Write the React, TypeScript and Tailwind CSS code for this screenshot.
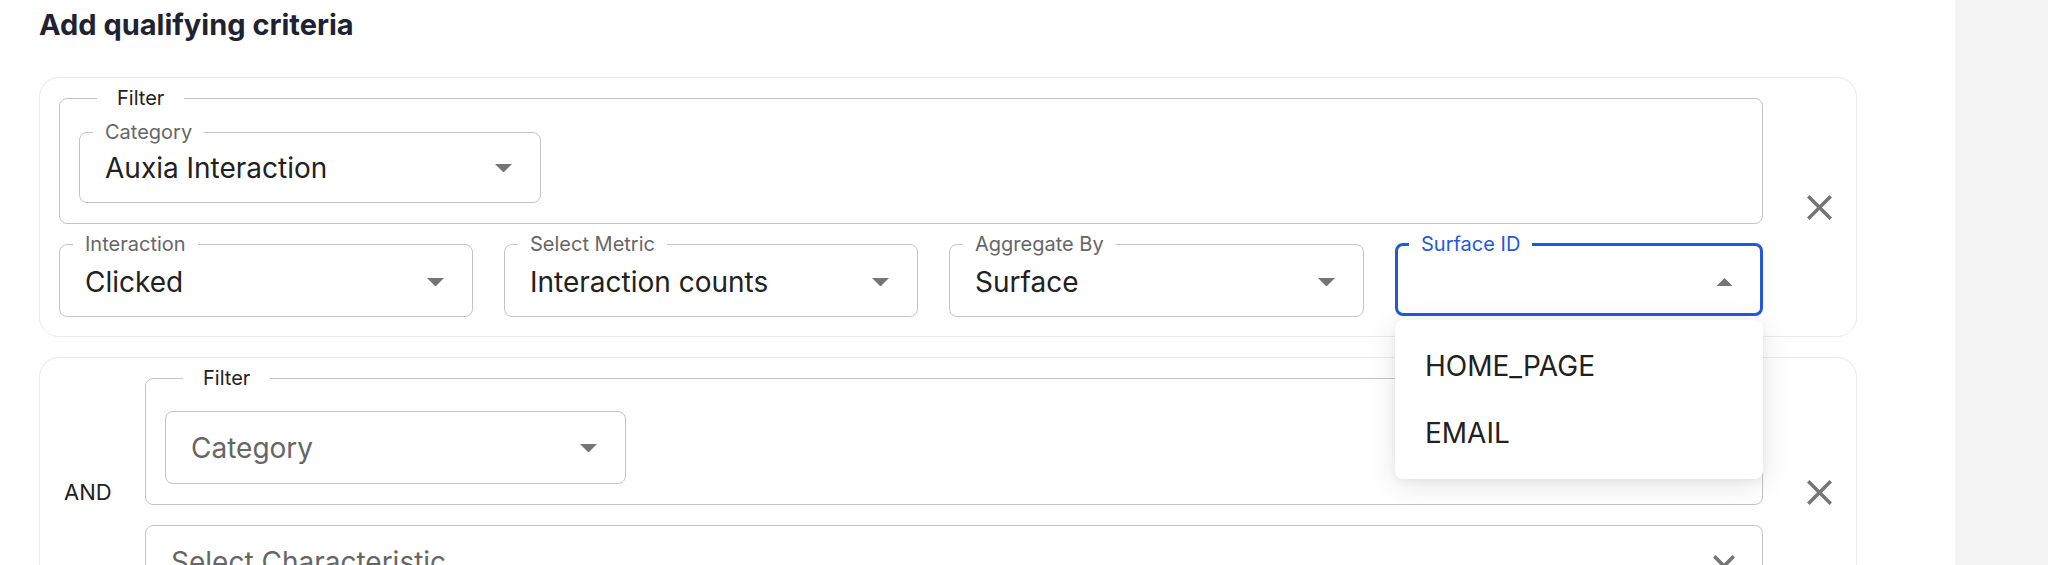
import React from "react";
import clsx from "clsx";

const CLOSE_PATH =
  "M19 6.41 17.59 5 12 10.59 6.41 5 5 6.41 10.59 12 5 17.59 6.41 19 12 13.41 17.59 19 19 17.59 13.41 12z";

const Caret = ({ up = false }: { up?: boolean }) => (
  <svg
    viewBox={up ? "7 9 10 5" : "7 10 10 5"}
    className="h-[8.5px] w-[17px] shrink-0 fill-[#757575]"
  >
    <path d={up ? "M7 14l5-5 5 5z" : "M7 10l5 5 5-5z"} />
  </svg>
);

const Chevron = () => (
  <svg viewBox="6 8.59 12 7.41" className="h-[13.6px] w-[22px] shrink-0 fill-[#757575]">
    <path d="M16.59 8.59 12 13.17 7.41 8.59 6 10l6 6 6-6z" />
  </svg>
);

const CloseBtn = ({ className }: { className?: string }) => (
  <button className={clsx("ml-[44px] shrink-0", className)}>
    <svg viewBox="5 5 14 14" className="h-[25px] w-[25px] fill-[#757575]">
      <path d={CLOSE_PATH} />
    </svg>
  </button>
);

// labelled outlined select (MUI-ish notched outline)
const LabelSelect = ({
  label,
  value,
  focused,
  small,
  className,
  children,
}: {
  label: string;
  value?: string;
  focused?: boolean;
  small?: boolean;
  className?: string;
  children?: React.ReactNode;
}) => (
  <div className={clsx("relative", className)}>
    <fieldset
      className={clsx(
        "min-w-0 rounded-[8px]",
        focused ? "border-[3px] border-[#2558d9]" : "border border-[#c4c4c4]"
      )}
    >
      <legend
        className={clsx(
          "px-[12px] text-[20px] leading-[24px]",
          focused ? "ml-[11px] text-[#2558d9]" : "ml-[13px] text-[#666666]"
        )}
      >
        {label}
      </legend>
      <div
        className={clsx(
          "flex items-center justify-between",
          focused ? "pl-[23px] pr-[27px]" : "pl-[25px] pr-[28px]",
          small ? "pt-[7px] pb-[17px]" : focused ? "pt-[9px] pb-[14px]" : "pt-[9px] pb-[17px]"
        )}
      >
        <span className="h-[34px] text-[28px] leading-[34px] text-[#212121]">{value}</span>
        <Caret up={focused} />
      </div>
    </fieldset>
    {children}
  </div>
);

const PlainSelect = ({
  placeholder,
  chevron,
  className,
}: {
  placeholder: string;
  chevron?: boolean;
  className?: string;
}) => (
  <div
    className={clsx(
      "flex items-center justify-between rounded-[8px] border border-[#c4c4c4] pt-[19px] pb-[18px] pl-[25px]",
      chevron ? "pr-[27px]" : "pr-[28px]",
      className
    )}
  >
    <span className="text-[28px] leading-[34px] text-[#666666]">{placeholder}</span>
    {chevron ? <Chevron /> : <Caret />}
  </div>
);

// legend sits at the content edge, so its margin is counted after pl-[19px]
const FilterBox = ({
  className,
  children,
}: {
  className?: string;
  children: React.ReactNode;
}) => (
  <fieldset
    className={clsx("min-w-0 rounded-[8px] border border-[#c4c4c4] pl-[19px] pb-[20px]", className)}
  >
    <legend className="ml-[18px] px-[20px] text-[20px] leading-[24px] text-[#222222]">
      Filter
    </legend>
    {children}
  </fieldset>
);

const options = ["HOME_PAGE", "EMAIL"];

export default function App() {
  return (
    <div className="flex h-[565px] w-full overflow-hidden bg-white font-[family-name:Inter,sans-serif]">
      <main className="w-[1955px] shrink-0 pl-[39px]">
        <h2 className="pt-[7px] text-[29px] font-bold leading-[36px] text-[#1e2231]">
          Add qualifying criteria
        </h2>

        {/* first criterion */}
        <section className="mt-[34px] flex w-[1818px] items-center rounded-[20px] border border-[#ebebeb] pt-[8px] pb-[19px] pl-[19px]">
          <div className="flex w-[1704px] flex-col">
            <FilterBox className="pt-[10px]">
              <LabelSelect label="Category" value="Auxia Interaction" small className="w-[462px]" />
            </FilterBox>
            <div className="mt-[8px] grid grid-cols-[414px_414px_415px_1fr] gap-[31px]">
              <LabelSelect label="Interaction" value="Clicked" />
              <LabelSelect label="Select Metric" value="Interaction counts" />
              <LabelSelect label="Aggregate By" value="Surface" />
              <LabelSelect label="Surface ID" focused>
                <ul className="absolute top-full right-0 left-0 z-10 mt-[3px] rounded-[8px] bg-white pt-[12px] pb-[13px] shadow-[0_6px_32px_rgba(0,0,0,0.10),0_2px_8px_rgba(0,0,0,0.06)]">
                  {options.map((o) => (
                    <li
                      key={o}
                      className="flex h-[67px] items-center pl-[30px] text-[28px] leading-[34px] text-[#212121]"
                    >
                      {o}
                    </li>
                  ))}
                </ul>
              </LabelSelect>
            </div>
          </div>
          <CloseBtn className="mt-[11px]" />
        </section>

        {/* second criterion */}
        <section className="mt-[20px] flex w-[1818px] items-center rounded-[20px] border border-[#ebebeb] pt-[8px] pb-[19px] pl-[24px]">
          <span className="w-[81px] shrink-0 text-[22px] leading-[28px] text-[#222222]">AND</span>
          <div className="flex w-[1618px] flex-col pb-[20px]">
            <FilterBox className="pt-[21px]">
              <PlainSelect placeholder="Category" className="w-[461px]" />
            </FilterBox>
            <PlainSelect placeholder="Select Characteristic" chevron className="mt-[20px]" />
          </div>
          <CloseBtn />
        </section>
      </main>
      <aside className="flex-1 bg-[#f4f4f4]" />
    </div>
  );
}
